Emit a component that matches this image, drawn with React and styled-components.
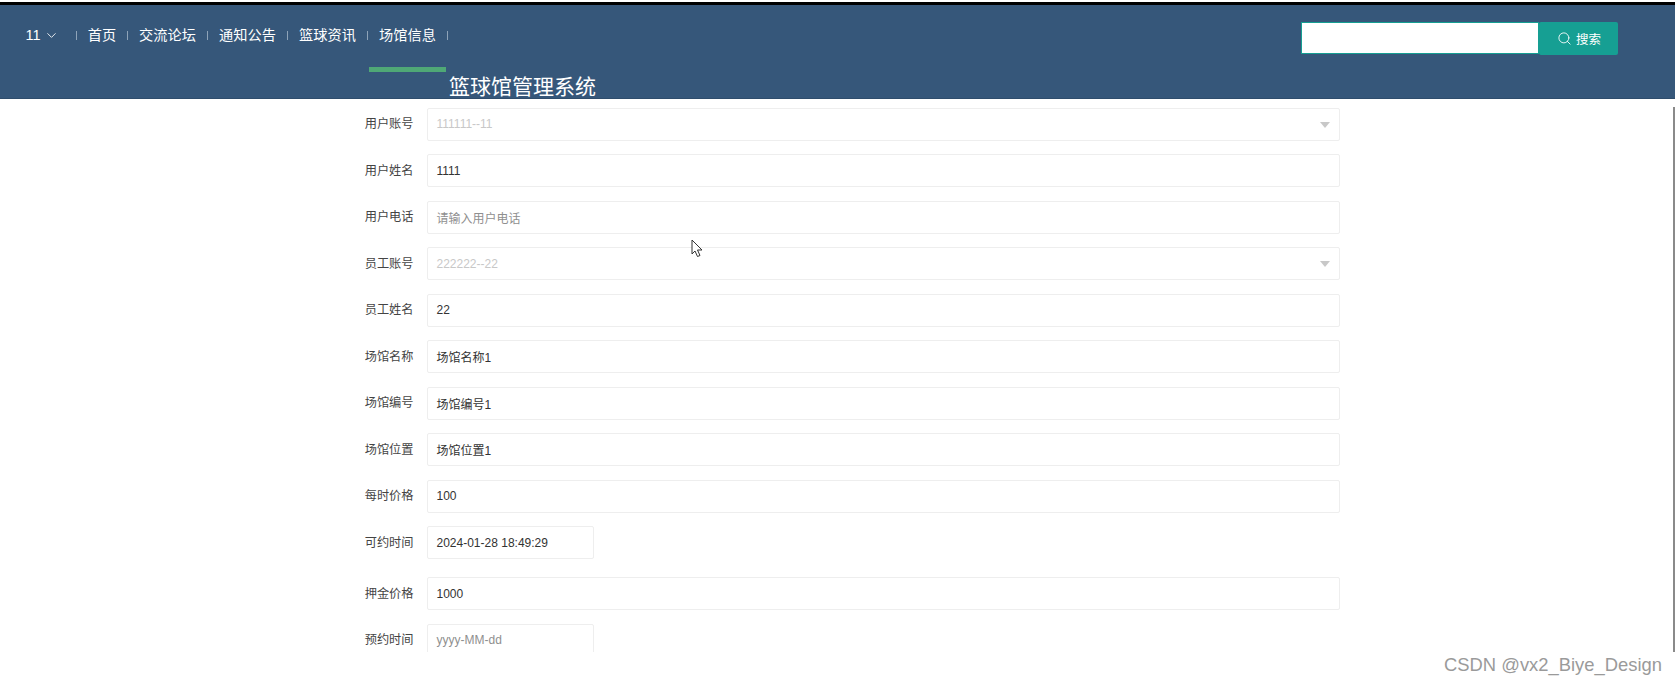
import React from 'react';
import styled, { createGlobalStyle } from 'styled-components';
import { ChevronDown, Search } from 'lucide-react';

const Global = createGlobalStyle`
  html, body { margin: 0; padding: 0; background: #fff; overflow: hidden; }
  body { font-family: "Liberation Sans", "Noto Sans CJK SC", sans-serif; }
  * { box-sizing: border-box; }
`;

const Page = styled.div`
  position: relative;
  width: 1675px;
  height: 684px;
  padding-top: 2px;
  overflow: hidden;
`;
const BlackRule = styled.div`
  height: 3px;
  background: #000;
`;
const Header = styled.header`
  height: 94px;
  background: #36577a;
  border-bottom: 1px solid #2f4d6c;
  overflow: hidden;
`;
const TopRow = styled.div`
  height: 61.5px;
  display: flex;
  align-items: flex-start;
  padding: 17px 57px 0 25.5px;
`;
const UserMenu = styled.div`
  display: flex;
  align-items: center;
  gap: 3px;
  width: 50.5px;
  height: 26px;
  color: #fff;
  font-size: 14.5px;
`;
const Nav = styled.nav`
  display: flex;
  align-items: center;
  height: 26px;
`;
const Sep = styled.span`
  width: 1px;
  height: 9px;
  background: #8ea3b8;
`;
const NavItem = styled.a`
  width: ${p => p.$wide ? '79px' : '50px'};
  text-align: center;
  color: #fff;
  font-size: 14.2px;
  line-height: 26px;
`;
const SearchBox = styled.div`
  margin-left: auto;
  display: flex;
  align-items: flex-start;
`;
const SearchInput = styled.input`
  width: 238px;
  height: 32px;
  background: #fff;
  border: 1px solid #169f93;
  outline: none;
`;
const SearchButton = styled.button`
  width: 79px;
  height: 33px;
  display: flex;
  align-items: center;
  justify-content: center;
  gap: 4px;
  padding: 0 0 0 1px;
  border: 0;
  border-radius: 2px;
  background: #169f93;
  color: #fff;
  font: 12.5px "Liberation Sans", "Noto Sans CJK SC", sans-serif;
`;
const BottomRow = styled.div`
  display: flex;
  align-items: flex-start;
  padding-left: 369px;
`;
const Bar = styled.div`
  width: 77px;
  height: 5px;
  background: #4fa876;
`;
const Title = styled.h1`
  margin: 8px 0 0 3px;
  color: #fff;
  font-size: 21px;
  font-weight: 400;
  line-height: 24px;
`;
const Main = styled.main`
  height: 553px;
  padding-top: 8.5px;
  overflow: hidden;
  position: relative;
`;
const Form = styled.form`
  margin-left: 350px;
  width: 989.5px;
  display: flex;
  flex-direction: column;
  gap: 13.5px;
`;
const Row = styled.div`
  display: grid;
  grid-template-columns: 63.5px 1fr;
  column-gap: 13.5px;
  align-items: center;
  margin-bottom: ${p => p.$date ? '4.5px' : '0'};
`;
const Label = styled.label`
  text-align: right;
  color: #444;
  font-size: 12.2px;
  line-height: 14px;
`;
const Field = styled.div`
  position: relative;
  width: ${p => p.$date ? '167px' : '100%'};
  height: 33px;
  display: flex;
  align-items: center;
  padding: 0 8.5px;
  border: 1px solid #eeeeee;
  border-radius: 2px;
  background: #fff;
  font-size: 12px;
  color: ${p => p.$tone === 'disabled' ? '#c8c8c8' : p.$tone === 'placeholder' ? '#8f8f8f' : '#333'};
`;
const Caret = styled.span`
  position: absolute;
  right: 8.5px;
  top: 13px;
  width: 0;
  height: 0;
  border-left: 5.5px solid transparent;
  border-right: 5.5px solid transparent;
  border-top: 6px solid #c8c8c8;
`;
const Thumb = styled.div`
  position: absolute;
  top: 8px;
  right: 0;
  width: 2.5px;
  bottom: 0;
  background: #8a8a8a;
`;
const Cursor = styled.svg`
  position: absolute;
  left: 691px;
  top: 239px;
`;
const Watermark = styled.div`
  position: absolute;
  left: 1444px;
  top: 654px;
  color: #9a9a9a;
  font-size: 18.4px;
  line-height: 21px;
  white-space: nowrap;
`;

const rows = [
  ['用户账号', '111111--11', 'disabled', 'select'],
  ['用户姓名', '1111'],
  ['用户电话', '请输入用户电话', 'placeholder'],
  ['员工账号', '222222--22', 'disabled', 'select'],
  ['员工姓名', '22'],
  ['场馆名称', '场馆名称1'],
  ['场馆编号', '场馆编号1'],
  ['场馆位置', '场馆位置1'],
  ['每时价格', '100'],
  ['可约时间', '2024-01-28 18:49:29', 'value', 'date'],
  ['押金价格', '1000'],
  ['预约时间', 'yyyy-MM-dd', 'placeholder', 'date'],
];

const nav = ['首页', '交流论坛', '通知公告', '篮球资讯', '场馆信息'];

export default function App() {
  return (
    <Page>
      <Global />
      <BlackRule />
      <Header>
        <TopRow>
          <UserMenu>11 <ChevronDown size={15} strokeWidth={1.4} /></UserMenu>
          <Nav>
            <Sep />
            {nav.map((n, i) => (
              <React.Fragment key={n}>
                <NavItem $wide={i > 0}>{n}</NavItem>
                <Sep />
              </React.Fragment>
            ))}
          </Nav>
          <SearchBox>
            <SearchInput aria-label="search" />
            <SearchButton><Search size={15} strokeWidth={1.4} />搜索</SearchButton>
          </SearchBox>
        </TopRow>
        <BottomRow>
          <Bar />
          <Title>篮球馆管理系统</Title>
        </BottomRow>
      </Header>
      <Main>
        <Form>
          {rows.map(([label, value, tone, kind]) => (
            <Row key={label} $date={kind === 'date'}>
              <Label>{label}</Label>
              <Field $tone={tone} $date={kind === 'date'}>
                {value}
                {kind === 'select' && <Caret />}
              </Field>
            </Row>
          ))}
        </Form>
        <Thumb />
      </Main>
      <Cursor width="12" height="19" viewBox="0 0 12 19">
        <path d="M1 1 L1 15 L4 12 L6.5 17.5 L9 16.5 L6.5 11 L11 11 Z" fill="#fff" stroke="#333" strokeWidth="1" strokeLinejoin="round" />
      </Cursor>
      <Watermark>CSDN @vx2_Biye_Design</Watermark>
    </Page>
  );
}
